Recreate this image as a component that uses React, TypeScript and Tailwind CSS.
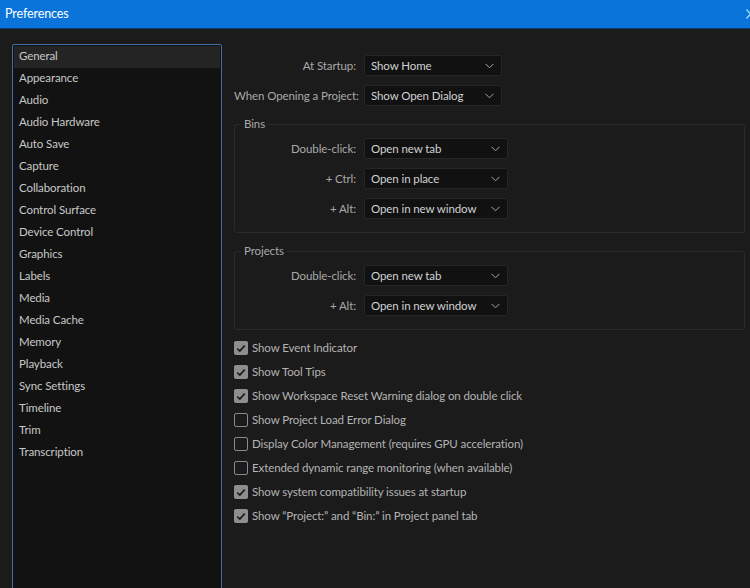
const sections = [
  'General',
  'Appearance',
  'Audio',
  'Audio Hardware',
  'Auto Save',
  'Capture',
  'Collaboration',
  'Control Surface',
  'Device Control',
  'Graphics',
  'Labels',
  'Media',
  'Media Cache',
  'Memory',
  'Playback',
  'Sync Settings',
  'Timeline',
  'Trim',
  'Transcription',
]

const options: [string, boolean][] = [
  ['Show Event Indicator', true],
  ['Show Tool Tips', true],
  ['Show Workspace Reset Warning dialog on double click', true],
  ['Show Project Load Error Dialog', false],
  ['Display Color Management (requires GPU acceleration)', false],
  ['Extended dynamic range monitoring (when available)', false],
  ['Show system compatibility issues at startup', true],
  ['Show “Project:” and “Bin:” in Project panel tab', true],
]

function Chevron() {
  return (
    <svg width="9" height="6" viewBox="0 0 9 6" className="shrink-0">
      <path d="M0.5 0.8 L4.5 4.8 L8.5 0.8" fill="none" stroke="#a8a8a8" strokeWidth="1" />
    </svg>
  )
}

function Dropdown({ value, wide }: { value: string; wide?: boolean }) {
  return (
    <div
      className={`flex h-[21px] items-center justify-between rounded-[2px] border border-[#262626] bg-[#111111] pl-[6px] pr-[7px] text-[#d2d2d2] ${
        wide ? 'w-[144px]' : 'w-[138px]'
      }`}
    >
      <span className="whitespace-nowrap">{value}</span>
      <Chevron />
    </div>
  )
}

function Row({ label, value, wide, labelW }: { label: string; value: string; wide?: boolean; labelW: string }) {
  return (
    <div className="flex h-[21px] items-center gap-[8px]">
      <div className={`${labelW} whitespace-nowrap text-right text-[#a9a9a9]`}>{label}</div>
      <Dropdown value={value} wide={wide} />
    </div>
  )
}

function Group({ title, rows }: { title: string; rows: [string, string][] }) {
  return (
    <fieldset className="rounded-[3px] border border-[#2b2b2b] pb-[13px] pt-[6px]">
      <legend className="ml-[6px] px-[3px] leading-[16px] text-[#a9a9a9]">{title}</legend>
      <div className="flex flex-col gap-[9px]">
        {rows.map(([l, v]) => (
          <Row key={l} label={l} value={v} wide labelW="w-[121px]" />
        ))}
      </div>
    </fieldset>
  )
}

function Check({ on }: { on: boolean }) {
  return on ? (
    <div className="flex h-[14px] w-[14px] items-center justify-center rounded-[2px] bg-[#8e8e8e]">
      <svg width="10" height="9" viewBox="0 0 10 9">
        <path d="M1.3 4.6 L3.8 7 L8.7 1.6" fill="none" stroke="#1b1b1b" strokeWidth="1.7" />
      </svg>
    </div>
  ) : (
    <div className="h-[14px] w-[14px] rounded-[2px] border-[1.5px] border-[#8a8a8a]" />
  )
}

export default function App() {
  return (
    <div
      className="flex h-[588px] w-[750px] flex-col overflow-hidden bg-[#1b1b1b] text-[11.5px] tracking-[-0.1px]"
      style={{ fontFamily: 'Lato, "Noto Sans", sans-serif' }}
    >
      <div className="flex h-[29px] shrink-0 items-center justify-between border-b border-[#0b3f72] bg-[#0a74da] pl-[5px]">
        <span className="text-[12.5px] text-white">Preferences</span>
        <svg width="4" height="10" viewBox="0 0 4 10" className="shrink-0">
          <path d="M0.5 0.5 L4 4.5 M0.5 9.5 L4 5.5" fill="none" stroke="#9fe3ff" strokeWidth="1.2" />
        </svg>
      </div>
      <div className="flex gap-[12px] pl-[12px] pt-[15px]">
        <div className="h-[560px] w-[210px] shrink-0 rounded-[2px] border border-[#3f6fa3] bg-[#121212] p-px">
          {sections.map((s, i) => (
            <div
              key={s}
              className={`flex h-[22px] items-center pb-[2px] pl-[5px] text-[#c8c8c8] ${i === 0 ? 'bg-[#242424]' : ''}`}
            >
              {s}
            </div>
          ))}
        </div>
        <div className="flex w-[511px] flex-col pt-[11px]">
          <div className="flex flex-col gap-[9px]">
            <Row label="At Startup:" value="Show Home" labelW="w-[122px]" />
            <Row label="When Opening a Project:" value="Show Open Dialog" labelW="w-[122px]" />
          </div>
          <div className="mt-[10px] flex flex-col gap-[10px]">
            <Group
              title="Bins"
              rows={[
                ['Double-click:', 'Open new tab'],
                ['+ Ctrl:', 'Open in place'],
                ['+ Alt:', 'Open in new window'],
              ]}
            />
            <Group
              title="Projects"
              rows={[
                ['Double-click:', 'Open new tab'],
                ['+ Alt:', 'Open in new window'],
              ]}
            />
          </div>
          <div className="mt-[6px] flex flex-col">
            {options.map(([t, on]) => (
              <div key={t} className="flex h-[24px] items-center gap-[4px] text-[#b4b4b4]">
                <Check on={on} />
                <span className="whitespace-nowrap">{t}</span>
              </div>
            ))}
          </div>
        </div>
      </div>
    </div>
  )
}
